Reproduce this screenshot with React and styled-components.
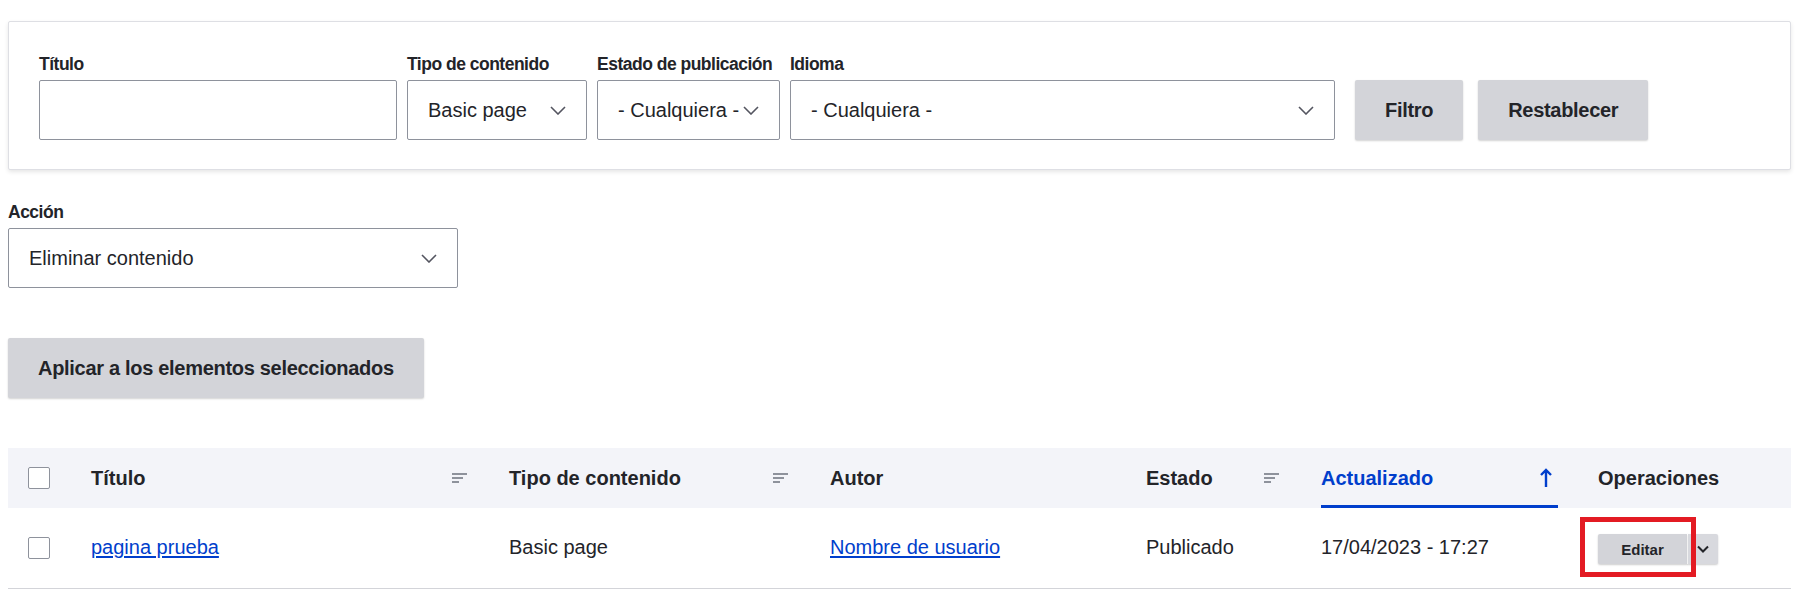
import styled, { createGlobalStyle } from 'styled-components';

const GlobalStyle = createGlobalStyle`
  * { box-sizing: border-box; }
  body {
    margin: 0;
    background: #fff;
    color: #232429;
    font-family: "Liberation Sans", Arial, sans-serif;
  }
`;

const Page = styled.div`
  padding: 21px 7px 0 8px;
`;

const FilterPanel = styled.form`
  display: flex;
  align-items: flex-end;
  gap: 10px;
  padding: 31px 30px 29px;
  border: 1px solid #dedfe4;
  border-radius: 2px;
  background: #fff;
  box-shadow: 0 2px 4px rgba(0, 0, 0, 0.1);
`;

const Field = styled.div`
  display: flex;
  flex-direction: column;
  flex: none;
  width: ${(p) => p.$width}px;
`;

const Label = styled.label`
  display: block;
  margin-bottom: 5px;
  font-size: 17.5px;
  font-weight: 700;
  line-height: 22px;
  letter-spacing: -0.5px;
  white-space: nowrap;
`;

const TextInput = styled.input`
  width: 100%;
  height: 60px;
  padding: 0 20px;
  border: 1px solid #8e929c;
  border-radius: 2px;
  font: inherit;
  font-size: 20px;
  color: #232429;
`;

const SelectBox = styled.div`
  position: relative;
  display: flex;
  align-items: center;
  width: ${(p) => (p.$width ? `${p.$width}px` : '100%')};
  height: 60px;
  padding: 0 20px;
  border: 1px solid #8e929c;
  border-radius: 2px;
  background: #fff;
  font-size: 20px;
  white-space: nowrap;
  overflow: hidden;

  & > svg {
    position: absolute;
    right: 20px;
    top: 50%;
    margin-top: -4px;
  }
`;

const ButtonRow = styled.div`
  display: flex;
  gap: 15px;
  margin-left: 10px;
`;

const Button = styled.button`
  height: 60px;
  padding: 0 30px;
  border: 0;
  border-radius: 2px;
  background: #d3d4d9;
  color: #232429;
  font: inherit;
  font-size: 20px;
  font-weight: 700;
  letter-spacing: -0.3px;
  box-shadow: 0 1px 2px rgba(0, 0, 0, 0.18);
  cursor: pointer;
`;

const ActionForm = styled.div`
  display: flex;
  flex-direction: column;
  align-items: flex-start;
  margin-top: 31px;
`;

const ApplyButton = styled(Button)`
  margin-top: 50px;
`;

const Table = styled.table`
  width: 100%;
  margin-top: 50px;
  border-collapse: collapse;
  table-layout: fixed;
  font-size: 20px;
`;

const Col = styled.col`
  width: ${(p) => (p.$w ? `${p.$w}px` : 'auto')};
`;

const HeadCell = styled.th`
  height: 60px;
  padding: 0 20px;
  background: #f3f4f9;
  text-align: left;
  font-weight: 700;
  color: ${(p) => (p.$active ? '#003ecc' : '#232429')};
`;

const HeadInner = styled.div`
  display: flex;
  align-items: center;
  justify-content: space-between;
  height: 60px;
  box-shadow: ${(p) => (p.$active ? 'inset 0 -3px 0 #003ecc' : 'none')};

  & > svg {
    flex: none;
    margin-right: ${(p) => (p.$active ? '6px' : '2px')};
  }
`;

const Cell = styled.td`
  height: 80px;
  padding: 0 20px;
  border-bottom: 1px solid #d3d4d9;
  white-space: nowrap;
`;

const Checkbox = styled.span`
  display: block;
  width: 22px;
  height: 22px;
  border: 1px solid #8e929c;
  border-radius: 2px;
  background: #fff;
`;

const Link = styled.a`
  color: #003ecc;
  text-decoration: underline;
  text-underline-offset: 2px;
`;

const OpsGroup = styled.div`
  position: relative;
  display: inline-flex;
  margin-top: 3px;
`;

const SmallButton = styled.button`
  width: 90px;
  height: 30px;
  padding: 0;
  border: 0;
  border-right: 1px solid #fff;
  border-radius: 2px 0 0 2px;
  background: #d3d4d9;
  color: #232429;
  font: inherit;
  font-size: 15px;
  font-weight: 700;
  box-shadow: 0 1px 2px rgba(0, 0, 0, 0.2);
`;

const ToggleButton = styled.button`
  display: flex;
  align-items: center;
  justify-content: center;
  width: 30px;
  height: 30px;
  padding: 0;
  border: 0;
  border-radius: 0 2px 2px 0;
  background: #d8d9de;
  box-shadow: 0 1px 2px rgba(0, 0, 0, 0.2);
`;

const Highlight = styled.span`
  position: absolute;
  left: -18px;
  top: -17px;
  width: 116px;
  height: 60px;
  border: 5px solid #e31b23;
  pointer-events: none;
`;

const Chevron = () => (
  <svg width="16" height="9" viewBox="0 0 16 9">
    <path d="M1 1l7 7 7-7" fill="none" stroke="#545560" strokeWidth="1.6" />
  </svg>
);

const SortIcon = () => (
  <svg width="15" height="10" viewBox="0 0 15 10">
    <rect x="0" y="0" width="15" height="2" fill="#8e929c" />
    <rect x="0" y="4" width="11" height="2" fill="#8e929c" />
    <rect x="0" y="8" width="7" height="2" fill="#8e929c" />
  </svg>
);

const ArrowUp = () => (
  <svg width="12" height="20" viewBox="0 0 12 20">
    <path d="M6 19V2M1 7l5-5 5 5" fill="none" stroke="#003ecc" strokeWidth="2.4" />
  </svg>
);

const columns = [
  { w: 63 },
  { w: 418, title: 'Título', sort: true },
  { w: 321, title: 'Tipo de contenido', sort: true },
  { w: 316, title: 'Autor' },
  { w: 175, title: 'Estado', sort: true },
  { w: 277, title: 'Actualizado', active: true },
  { title: 'Operaciones' },
];

export default function App() {
  return (
    <Page>
      <GlobalStyle />
      <FilterPanel onSubmit={(e) => e.preventDefault()}>
        <Field $width={358}>
          <Label>Título</Label>
          <TextInput type="text" />
        </Field>
        <Field $width={180}>
          <Label>Tipo de contenido</Label>
          <SelectBox>
            Basic page
            <Chevron />
          </SelectBox>
        </Field>
        <Field $width={183}>
          <Label>Estado de publicación</Label>
          <SelectBox>
            - Cualquiera -
            <Chevron />
          </SelectBox>
        </Field>
        <Field $width={545}>
          <Label>Idioma</Label>
          <SelectBox>
            - Cualquiera -
            <Chevron />
          </SelectBox>
        </Field>
        <ButtonRow>
          <Button type="submit">Filtro</Button>
          <Button type="button">Restablecer</Button>
        </ButtonRow>
      </FilterPanel>

      <ActionForm>
        <Label>Acción</Label>
        <SelectBox $width={450}>
          Eliminar contenido
          <Chevron />
        </SelectBox>
        <ApplyButton type="button">Aplicar a los elementos seleccionados</ApplyButton>
      </ActionForm>

      <Table>
        <colgroup>
          {columns.map((c, i) => (
            <Col key={i} $w={c.w} />
          ))}
        </colgroup>
        <thead>
          <tr>
            {columns.map((c, i) => (
              <HeadCell key={i} $active={c.active}>
                <HeadInner $active={c.active}>
                  {i === 0 ? <Checkbox /> : <span>{c.title}</span>}
                  {c.sort && <SortIcon />}
                  {c.active && <ArrowUp />}
                </HeadInner>
              </HeadCell>
            ))}
          </tr>
        </thead>
        <tbody>
          <tr>
            <Cell>
              <Checkbox />
            </Cell>
            <Cell>
              <Link href="#">pagina prueba</Link>
            </Cell>
            <Cell>Basic page</Cell>
            <Cell>
              <Link href="#">Nombre de usuario</Link>
            </Cell>
            <Cell>Publicado</Cell>
            <Cell>17/04/2023 - 17:27</Cell>
            <Cell>
              <OpsGroup>
                <SmallButton type="button">Editar</SmallButton>
                <ToggleButton type="button">
                  <svg width="12" height="8" viewBox="0 0 12 8">
                    <path d="M1 1.5l5 5 5-5" fill="none" stroke="#232429" strokeWidth="2" />
                  </svg>
                </ToggleButton>
                <Highlight />
              </OpsGroup>
            </Cell>
          </tr>
        </tbody>
      </Table>
    </Page>
  );
}
